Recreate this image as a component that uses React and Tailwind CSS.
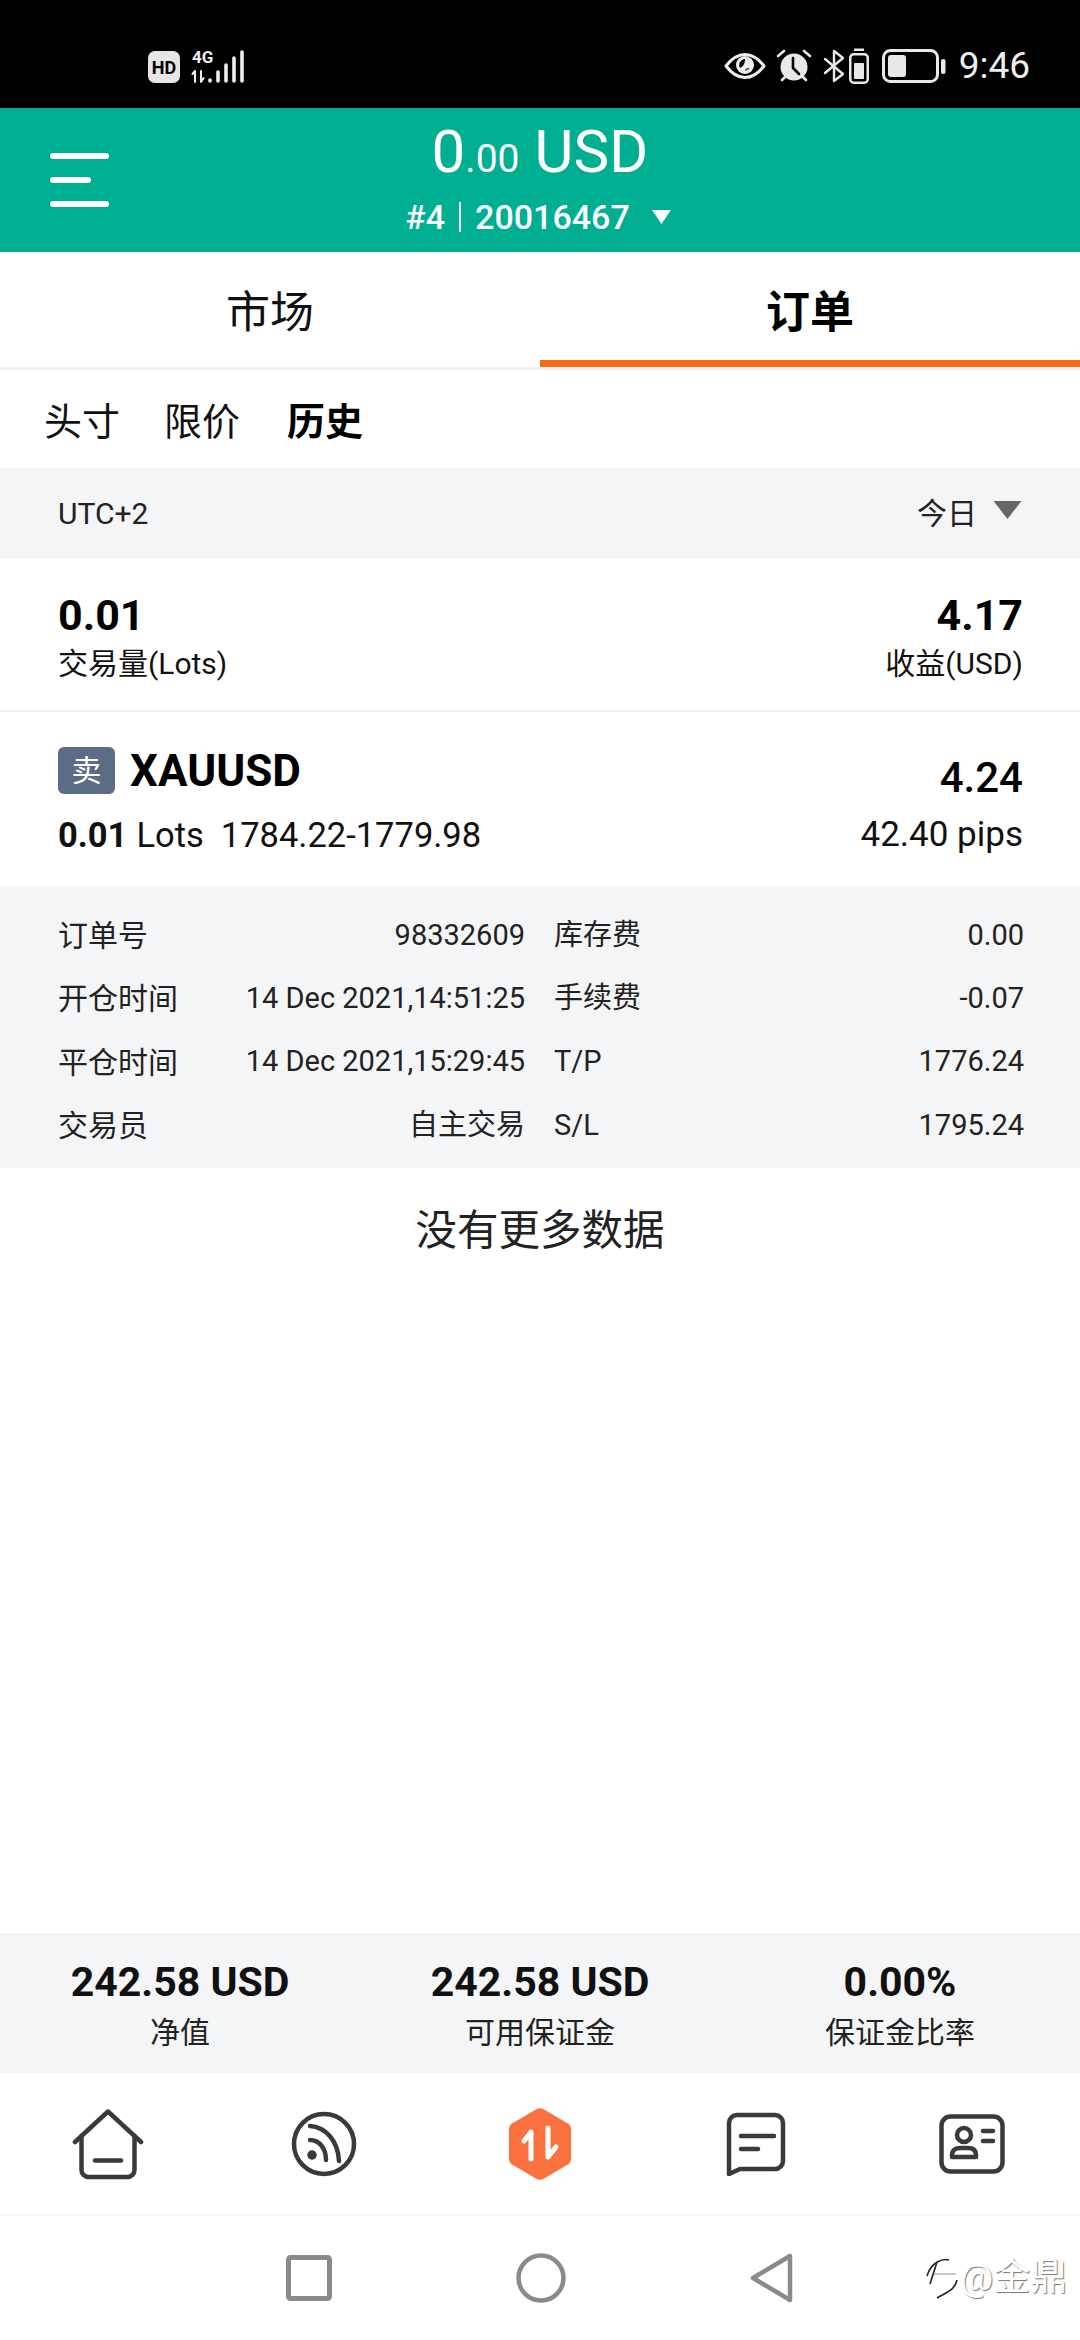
import React from "react";

const Eye = () => (
  <svg width="42" height="28" viewBox="0 0 42 28" fill="none">
    <path d="M2 14C8 6 14 2.500 21 2.500S34 6 40 14C34 22 28 25.500 21 25.500S8 22 2 14Z" stroke="#eee" strokeWidth="3" strokeLinejoin="round" />
    <circle cx="21" cy="13" r="9" fill="#eee" />
    <path d="M21 7a6 6 0 0 0-5 9c2-1 5-3 5-9Z" fill="#000" />
    <path d="M21 19a6 6 0 0 0 5-3h-3c-1 0-2 1-2 3Z" fill="#000" opacity=".55" />
  </svg>
);
const Alarm = () => (
  <svg width="36" height="34" viewBox="0 0 36 34" fill="none">
    <circle cx="18" cy="18" r="13.500" fill="#e8e8e8" />
    <path d="M17 9v10l6 6" stroke="#000" strokeWidth="2.600" strokeLinecap="round" strokeLinejoin="round" />
    <path d="M2 7l6-5M34 7l-6-5M6 31l3-3M30 31l-3-3" stroke="#e8e8e8" strokeWidth="2.600" strokeLinecap="round" />
  </svg>
);
const Bluetooth = () => (
  <svg width="22" height="34" viewBox="0 0 22 34" fill="none">
    <path d="M2 10l18 15-9 7V2l9 7L2 24" stroke="#e8e8e8" strokeWidth="2.400" strokeLinejoin="round" strokeLinecap="round" />
  </svg>
);
const SmallBattery = () => (
  <svg width="20" height="36" viewBox="0 0 20 36" fill="none">
    <rect x="5" y="0.500" width="10" height="2.500" fill="#e8e8e8" />
    <rect x="1.250" y="6.250" width="17.500" height="28.500" rx="3.500" stroke="#e8e8e8" strokeWidth="2.500" />
    <rect x="5" y="15" width="10" height="16" rx="1" fill="#e8e8e8" />
  </svg>
);
const BigBattery = () => (
  <svg width="64" height="34" viewBox="0 0 64 34" fill="none">
    <rect x="1.500" y="1.500" width="54" height="31" rx="7" stroke="#e8e8e8" strokeWidth="3" />
    <rect x="6" y="6" width="18" height="22" rx="3" fill="#e8e8e8" />
    <rect x="59" y="10" width="4.500" height="15" rx="2" fill="#e8e8e8" />
  </svg>
);

const Signal = () => (
  <div className="relative w-[56px] h-[34px]">
    <span className="absolute left-[1px] top-[-2px] text-[17px] leading-[18px] font-bold text-[#eee]">4G</span>
    <svg className="absolute left-0 top-0" width="56" height="34" viewBox="0 0 56 34" fill="none">
      <path d="M4 32V21l-2.500 3M10 21v11l2.500-4" stroke="#eee" strokeWidth="2" strokeLinecap="round" strokeLinejoin="round" />
      <g stroke="#eee" strokeWidth="3.600" strokeLinecap="round">
        <path d="M19 30v1" />
        <path d="M27 22v9" />
        <path d="M35 15v16" />
        <path d="M43 8v23" />
        <path d="M51 2v29" />
      </g>
    </svg>
  </div>
);

const Down = ({ cls }) => (
  <svg className={cls} viewBox="0 0 20 14" preserveAspectRatio="none">
    <path d="M1 0H19L10 14Z" fill="currentColor" />
  </svg>
);

const HomeIcon = () => (
  <svg width="72" height="72" viewBox="0 0 72 72" fill="none" stroke="#3a3a3a" strokeWidth="4.500" strokeLinecap="round" strokeLinejoin="round">
    <path d="M3 34L36 3.500 69 34" />
    <path d="M9.500 28V62a7 7 0 0 0 7 7h39a7 7 0 0 0 7-7V28" />
    <path d="M23 52.500h26" />
  </svg>
);
const FeedIcon = () => (
  <svg width="66" height="68" viewBox="0 0 66 68" fill="none" stroke="#3a3a3a" strokeWidth="4.500" strokeLinecap="round">
    <circle cx="33" cy="34" r="30" />
    <path d="M19 16c15 1 28 14 29 35" />
    <path d="M19 30c9 0 16 8 16 20" />
    <circle cx="21" cy="45" r="4" fill="#3a3a3a" stroke="none" />
    <circle cx="21" cy="45" r="2.500" fill="#3a3a3a" />
  </svg>
);
const TradeIcon = () => (
  <svg width="64" height="72" viewBox="0 0 64 72" fill="none">
    <path d="M27 2a9 9 0 0 1 10 0l22 13a7 7 0 0 1 4 6v30a7 7 0 0 1-4 6L37 70a9 9 0 0 1-10 0L5 57a7 7 0 0 1-4-6V21a7 7 0 0 1 4-6Z" fill="#fb7240" />
    <path d="M23 51V24l-7 9" stroke="#fff" strokeWidth="5" strokeLinecap="round" strokeLinejoin="round" />
    <path d="M40 20v29l8-10" stroke="#fff" strokeWidth="5" strokeLinecap="round" strokeLinejoin="round" />
  </svg>
);
const ChatIcon = () => (
  <svg width="60" height="64" viewBox="0 0 60 64" fill="none" stroke="#3a3a3a" strokeWidth="4.500" strokeLinecap="round" strokeLinejoin="round">
    <path d="M11 3h38a8 8 0 0 1 8 8v38a8 8 0 0 1-8 8H14L3 62V11a8 8 0 0 1 8-8Z" />
    <path d="M15 24h33" />
    <path d="M15 37h17" />
  </svg>
);
const CardIcon = () => (
  <svg width="66" height="60" viewBox="0 0 66 60" fill="none" stroke="#3a3a3a" strokeWidth="4.500" strokeLinecap="round" strokeLinejoin="round">
    <rect x="2.500" y="2.500" width="61" height="55" rx="9" />
    <circle cx="25" cy="21" r="7" />
    <path d="M13 43v-2c0-5 4-7 8-7h8c5 0 8 2 8 7v2Z" />
    <path d="M44 17h10M44 27h10" />
  </svg>
);

function Detail({ l, v, l2, v2 }) {
  return (
    <div className="h-[63.300px] flex items-center">
      <span className="w-[120px] shrink-0 text-[30px]">{l}</span>
      <span className="w-[347px] shrink-0 text-right">{v}</span>
      <span className="ml-[29px] flex-1">{l2}</span>
      <span>{v2}</span>
    </div>
  );
}

function Stat({ v, l }) {
  return (
    <div className="flex-1 flex flex-col items-center">
      <span className="h-[50px] leading-[50px] text-[41px] font-bold">{v}</span>
      <span className="h-[50px] mt-[1px] leading-[50px] text-[30px] text-[#222]">{l}</span>
    </div>
  );
}

export default function App() {
  return (
    <div className="relative w-[1080px] h-[2340px] flex flex-col bg-white text-[#111] overflow-hidden [font-family:Roboto,'Noto_Sans_CJK_SC',sans-serif]">
      {/* status bar */}
      <div className="h-[108px] bg-black flex items-end pb-[24px] pl-[148px] pr-[50px] justify-between">
        <div className="flex items-center gap-[11px]">
          <div className="w-[32px] h-[32px] rounded-[7px] bg-[#e6e6e6] text-black text-[18px] font-bold flex items-center justify-center">HD</div>
          <Signal />
        </div>
        <div className="flex items-center">
          <Eye />
          <div className="ml-[10px]"><Alarm /></div>
          <div className="ml-[11px]"><Bluetooth /></div>
          <div className="ml-[4px]"><SmallBattery /></div>
          <div className="ml-[13px]"><BigBattery /></div>
          <span className="ml-[13px] text-[37px] leading-[34px] text-[#eee]">9:46</span>
        </div>
      </div>

      {/* header */}
      <div className="relative h-[144px] bg-[#00ae91] flex flex-col items-center text-white">
        <div className="absolute left-[50px] top-[45px] flex flex-col gap-[18px]">
          <div className="w-[59px] h-[6px] rounded-full bg-white" />
          <div className="w-[41px] h-[6px] rounded-full bg-white" />
          <div className="w-[59px] h-[6px] rounded-full bg-white" />
        </div>
        <div className="h-[80px] mt-[4px] flex items-baseline leading-[80px] text-[60px]">
          <span>0</span>
          <span className="text-[39px]">.00</span>
          <span className="ml-[15px]">USD</span>
        </div>
        <div className="flex items-center h-[40px] mt-[5px] mr-[3px] text-[34px] font-medium">
          <span>#4</span>
          <span className="w-[2px] h-[30px] bg-white mx-[14px]" />
          <span>20016467</span>
          <Down cls="w-[21px] h-[14px] ml-[21px] text-white" />
        </div>
      </div>

      {/* tabs */}
      <div className="h-[118px] flex border-b-[3px] border-[#f1f2f4]">
        <div className="flex-1 flex items-center justify-center pt-[6px] text-[44px]">市场</div>
        <div className="flex-1 flex items-center justify-center pt-[6px] text-[44px] font-bold text-black relative">
          订单
          <div className="absolute inset-x-0 bottom-0 h-[7px] bg-[#f56a14]" />
        </div>
      </div>

      {/* sub tabs */}
      <div className="h-[98px] flex items-center pl-[44px] pt-[6px] text-[38px]">
        <span>头寸</span>
        <span className="ml-[44px]">限价</span>
        <span className="ml-[47px] font-bold text-black">历史</span>
      </div>

      {/* filter */}
      <div className="h-[90px] bg-[#f4f5f7] flex items-center justify-between pl-[58px] pr-[57px] text-[30px] text-[#222]">
        <span>UTC+2</span>
        <div className="flex items-center">
          <span>今日</span>
          <Down cls="w-[31px] h-[18px] ml-[15px] mb-[6px] text-[#666]" />
        </div>
      </div>

      {/* summary */}
      <div className="h-[154px] border-b-[2px] border-[#f1f2f4] flex justify-between pl-[58px] pr-[57px] pt-[32px]">
        <div className="flex flex-col">
          <span className="text-[43px] leading-[50px] font-bold text-black">0.01</span>
          <span className="text-[30px] leading-[44px] mt-[2px]">交易量(Lots)</span>
        </div>
        <div className="flex flex-col items-end">
          <span className="text-[43px] leading-[50px] font-bold text-black">4.17</span>
          <span className="text-[30px] leading-[44px] mt-[2px]">收益(USD)</span>
        </div>
      </div>

      {/* order */}
      <div className="h-[174px] pl-[58px] pr-[57px] pt-[35px] flex justify-between">
        <div className="flex flex-col">
          <div className="flex items-center h-[47px]">
            <div className="w-[57px] h-[47px] rounded-[6px] bg-[#5c6c87] text-white text-[30px] flex items-center justify-center">卖</div>
            <span className="ml-[15px] text-[44px] font-bold text-black">XAUUSD</span>
          </div>
          <div className="mt-[18px] text-[34.500px] leading-[46px] whitespace-nowrap">
            <span className="font-bold">0.01</span>
            <span className="ml-[9px]">Lots</span>
            <span className="ml-[17px]">1784.22-1779.98</span>
          </div>
        </div>
        <div className="flex flex-col items-end">
          <span className="mt-[8px] h-[46px] leading-[46px] text-[42px] font-medium text-black">4.24</span>
          <span className="mt-[11px] text-[35px] leading-[46px]">42.40 pips</span>
        </div>
      </div>

      {/* details */}
      <div className="h-[282px] bg-[#f4f5f7] pl-[58px] pr-[56px] pt-[18px] text-[29px] text-[#222]">
        <Detail l="订单号" v="98332609" l2="库存费" v2="0.00" />
        <Detail l="开仓时间" v="14 Dec 2021,14:51:25" l2="手续费" v2="-0.07" />
        <Detail l="平仓时间" v="14 Dec 2021,15:29:45" l2="T/P" v2="1776.24" />
        <Detail l="交易员" v="自主交易" l2="S/L" v2="1795.24" />
      </div>

      <div className="flex-1">
        <div className="h-[126px] flex items-center justify-center text-[41.500px] text-[#222]">没有更多数据</div>
      </div>

      {/* stats */}
      <div className="h-[140px] bg-[#f4f5f7] flex pt-[24px]">
        <Stat v="242.58 USD" l="净值" />
        <Stat v="242.58 USD" l="可用保证金" />
        <Stat v="0.00%" l="保证金比率" />
      </div>

      {/* nav */}
      <div className="h-[143px] border-b-[2px] border-[#f6f6f6] flex">
        <div className="flex-1 flex items-center justify-center"><HomeIcon /></div>
        <div className="flex-1 flex items-center justify-center"><FeedIcon /></div>
        <div className="flex-1 flex items-center justify-center"><TradeIcon /></div>
        <div className="flex-1 flex items-center justify-center"><ChatIcon /></div>
        <div className="flex-1 flex items-center justify-center"><CardIcon /></div>
      </div>

      {/* system nav */}
      <div className="h-[124px] relative flex items-center justify-center gap-[184px]">
        <svg width="46" height="46" viewBox="0 0 46 46" fill="none"><rect x="2.500" y="2.500" width="41" height="41" rx="2" stroke="#8a8a8a" strokeWidth="5" /></svg>
        <svg width="50" height="50" viewBox="0 0 50 50" fill="none"><circle cx="25" cy="25" r="22.500" stroke="#8a8a8a" strokeWidth="4.500" /></svg>
        <svg width="44" height="50" viewBox="0 0 44 50" fill="none"><path d="M40 3V47L3 25Z" stroke="#8a8a8a" strokeWidth="4.500" strokeLinejoin="round" /></svg>
        <div className="absolute left-[925px] top-[40px] flex items-center text-white text-[37px] leading-[44px] [text-shadow:1px_1px_1px_#777]">
          <svg width="36" height="44" viewBox="0 0 36 44" fill="none" stroke="#222" strokeWidth="1.600">
            <path d="M2 20C6 6 18 2 24 4" />
            <path d="M12 6L5 28" />
            <path d="M32 24C30 34 22 36 12 42" />
            <path d="M9 18h22" stroke="#bbb" />
          </svg>
          <span className="-ml-[1px]">@金鼎</span>
        </div>
      </div>
    </div>
  );
}
